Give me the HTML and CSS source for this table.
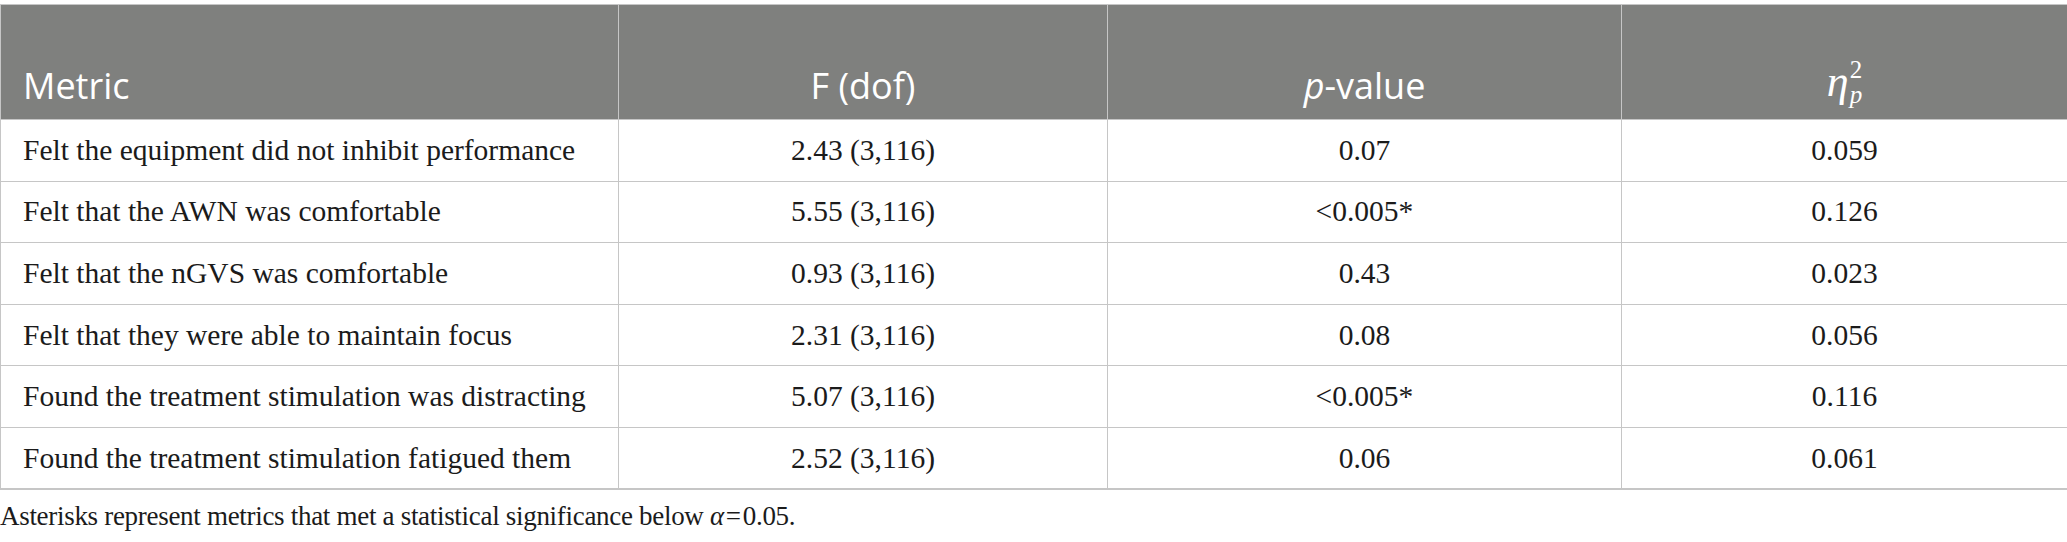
FILE: index.html
```html
<!DOCTYPE html>
<html lang="en">
<head>
<meta charset="utf-8">
<title>Table</title>
<link rel="stylesheet" href="styles.css">
</head>
<body>
<div class="page">
  <table class="stats">
    <colgroup>
      <col class="c1"><col class="c2"><col class="c3"><col class="c4">
    </colgroup>
    <thead>
      <tr>
        <th class="left">Metric</th>
        <th>F (dof)</th>
        <th><i>p</i>-value</th>
        <th><span class="eta"><i class="eta-sym">η</i><span class="eta-idx"><span class="sup">2</span><i class="sub">p</i></span></span></th>
      </tr>
    </thead>
    <tbody>
      <tr><td class="left">Felt the equipment did not inhibit performance</td><td>2.43 (3,116)</td><td>0.07</td><td>0.059</td></tr>
      <tr><td class="left">Felt that the AWN was comfortable</td><td>5.55 (3,116)</td><td>&lt;0.005*</td><td>0.126</td></tr>
      <tr><td class="left">Felt that the nGVS was comfortable</td><td>0.93 (3,116)</td><td>0.43</td><td>0.023</td></tr>
      <tr><td class="left">Felt that they were able to maintain focus</td><td>2.31 (3,116)</td><td>0.08</td><td>0.056</td></tr>
      <tr><td class="left">Found the treatment stimulation was distracting</td><td>5.07 (3,116)</td><td>&lt;0.005*</td><td>0.116</td></tr>
      <tr><td class="left">Found the treatment stimulation fatigued them</td><td>2.52 (3,116)</td><td>0.06</td><td>0.061</td></tr>
    </tbody>
  </table>
  <p class="note">Asterisks represent metrics that met a statistical significance below <i>α</i>&#8202;=&#8202;0.05.</p>
</div>
</body>
</html>
```
FILE: styles.css
```css
html, body {
  margin: 0;
  padding: 0;
  background: #ffffff;
}
.page {
  padding-top: 4px;
  width: 2067px;
}
.stats {
  width: 2067px;
  border-collapse: collapse;
  table-layout: fixed;
  border-bottom: 2px solid #c6c6c6;
}
.c1 { width: 618px; }
.c2 { width: 489px; }
.c3 { width: 514px; }
.c4 { width: 446px; }
.stats th {
  background: #7f807e;
  color: #ffffff;
  font-family: "Open Sans", "Noto Sans", sans-serif;
  font-weight: 400;
  font-size: 36px;
  line-height: 1.2;
  height: 115px;
  box-sizing: border-box;
  padding: 0 22px 12px;
  vertical-align: bottom;
  text-align: center;
  border: 1px solid #c6c6c6;
}
.stats td {
  font-family: "Liberation Serif", "Times New Roman", serif;
  font-size: 29.5px;
  color: #1b1b1b;
  height: 61.6px;
  box-sizing: border-box;
  padding: 0 22px;
  vertical-align: middle;
  text-align: center;
  border: 1px solid #c6c6c6;
}
.stats .left { text-align: left; }
.eta {
  display: inline-flex;
  align-items: center;
  font-family: "Liberation Serif", "Times New Roman", serif;
  font-size: 44px;
  line-height: 1;
}
.eta-sym { font-style: italic; }
.eta-idx {
  display: inline-flex;
  flex-direction: column;
  font-size: 25px;
  line-height: 1;
  margin-left: 1px;
}
.eta-idx .sup { font-style: normal; }
.eta-idx .sub { font-style: italic; }
.note {
  margin: 11px 0 0;
  font-family: "Liberation Serif", "Times New Roman", serif;
  font-size: 27px;
  color: #1b1b1b;
  letter-spacing: -0.3px;
}
.note i { font-style: italic; }
```
